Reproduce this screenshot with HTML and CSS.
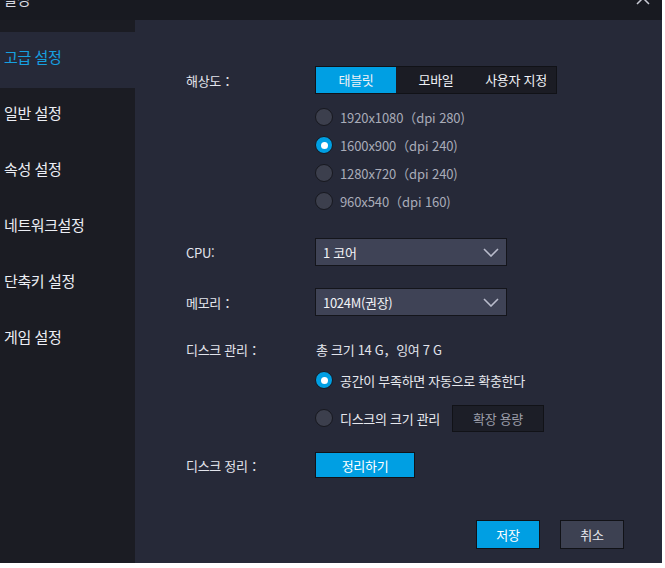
FILE: index.html
```html
<!DOCTYPE html>
<html lang="ko">
<head>
  <meta charset="UTF-8">
  <title>설정</title>
  <link rel="stylesheet" href="styles.css">
</head>
<body>
  <div class="dialog">
    <div class="titlebar">
      <span class="title">설정</span>
      <svg class="close" width="14" height="14" viewBox="0 0 14 14">
        <path d="M1 1 L13 13 M13 1 L1 13" stroke="#c8cad4" stroke-width="1.5" fill="none"/>
      </svg>
    </div>

    <div class="body">
      <ul class="sidebar">
        <li class="active">고급 설정</li>
        <li>일반 설정</li>
        <li>속성 설정</li>
        <li>네트워크설정</li>
        <li>단축키 설정</li>
        <li>게임 설정</li>
      </ul>

      <div class="main">
        <div class="row row-res">
          <span class="label">해상도：</span>
          <div class="tabs">
            <span class="tab active">태블릿</span>
            <span class="tab">모바일</span>
            <span class="tab">사용자 지정</span>
          </div>
        </div>

        <div class="radios">
          <div class="radio dim"><span class="dot"></span>1920x1080（dpi 280)</div>
          <div class="radio dim"><span class="dot on"></span>1600x900（dpi 240)</div>
          <div class="radio dim"><span class="dot"></span>1280x720（dpi 240)</div>
          <div class="radio dim"><span class="dot"></span>960x540（dpi 160)</div>
        </div>

        <div class="row row-cpu">
          <span class="label">CPU:</span>
          <div class="select">
            <span>1 코어</span>
            <svg width="16" height="9" viewBox="0 0 16 9"><path d="M1 1 L8 8 L15 1" stroke="#b9bccc" stroke-width="1.6" fill="none"/></svg>
          </div>
        </div>

        <div class="row row-mem">
          <span class="label">메모리：</span>
          <div class="select">
            <span>1024M(권장)</span>
            <svg width="16" height="9" viewBox="0 0 16 9"><path d="M1 1 L8 8 L15 1" stroke="#b9bccc" stroke-width="1.6" fill="none"/></svg>
          </div>
        </div>

        <div class="row row-disk">
          <span class="label">디스크 관리：</span>
          <span class="info">총 크기 14 G，잉여 7 G</span>
        </div>

        <div class="radio auto"><span class="dot on"></span>공간이 부족하면 자동으로 확충한다</div>
        <div class="radio manual">
          <span class="dot"></span>디스크의 크기 관리
          <button class="btn btn-dark">확장 용량</button>
        </div>

        <div class="row row-clean">
          <span class="label">디스크 정리：</span>
          <button class="btn btn-blue btn-clean">정리하기</button>
        </div>

        <div class="footer">
          <button class="btn btn-blue btn-foot">저장</button>
          <button class="btn btn-grey btn-foot">취소</button>
        </div>
      </div>
    </div>
  </div>
</body>
</html>
```

FILE: styles.css
```css
body {
  margin: 0;
  background: #fff;
  font-family: "Noto Sans CJK KR", sans-serif;
  font-size: 13px;
  color: #e2e4ec;
}
.dialog {
  width: 662px;
  height: 583px;
  margin-top: -20px;
  display: flex;
  flex-direction: column;
  background: #262938;
}
.titlebar {
  height: 40px;
  flex: none;
  display: flex;
  align-items: center;
  justify-content: space-between;
  padding: 0 12px 0 3px;
  background: #181a21;
  box-sizing: border-box;
}
.title {
  font-size: 15px;
  color: #d8dae2;
  margin-top: -4px;
}
.close {
  margin-top: -4px;
}
.body {
  flex: 1;
  display: flex;
}
.sidebar {
  list-style: none;
  margin: 0;
  padding: 12px 0 0;
  width: 135px;
  background: #1b1c23;
}
.sidebar li {
  height: 56px;
  line-height: 50px;
  padding-left: 4px;
  box-sizing: border-box;
  padding-bottom: 6px;
  font-size: 15px;
  letter-spacing: -0.4px;
  color: #eceef4;
}
.sidebar li.active {
  background: #262938;
  color: #17a0e0;
}
.main {
  flex: 1;
  padding: 46px 0 0 51px;
  letter-spacing: -0.3px;
}
.row {
  display: flex;
  align-items: center;
}
.label {
  width: 129px;
  flex: none;
}
.tabs {
  display: flex;
  border: 1px solid #111217;
  background: #1b1c24;
}
.tab {
  width: 80px;
  height: 26px;
  line-height: 26px;
  text-align: center;
  color: #f0f2f6;
}
.tab.active {
  background: #009fe3;
}
.radios {
  margin: 9px 0 0 129px;
}
.radio {
  height: 28px;
  display: flex;
  align-items: center;
  color: #e6e8ee;
}
.radio.dim {
  color: #a9acb8;
  letter-spacing: -0.1px;
}
.dot {
  width: 16px;
  height: 16px;
  border-radius: 50%;
  border: 1px solid #17181f;
  background: #3c3f4d;
  margin-right: 7px;
  position: relative;
  flex: none;
}
.dot.on {
  background: #009fe3;
}
.dot.on::after {
  content: "";
  position: absolute;
  left: 4.5px;
  top: 4.5px;
  width: 7px;
  height: 7px;
  border-radius: 50%;
  background: #fff;
}
.row-cpu {
  margin-top: 23px;
}
.row-mem {
  margin-top: 22px;
}
.select {
  width: 176px;
  height: 26px;
  padding: 0 7px;
  border: 1px solid #14151b;
  background: #3f4356;
  display: flex;
  align-items: center;
  justify-content: space-between;
}
.select span {
  color: #f2f3f7;
}
.row-disk {
  margin-top: 22px;
  height: 22px;
}
.info {
  margin-left: 1px;
}
.auto {
  margin: 6px 0 0 129px;
}
.manual {
  margin: 10px 0 0 129px;
}
.btn {
  font-family: inherit;
  font-size: 13px;
  letter-spacing: -0.3px;
  border: 1px solid #111217;
  padding: 0;
  cursor: pointer;
}
.btn-dark {
  width: 92px;
  height: 27px;
  margin-left: 12px;
  background: #1c1e27;
  color: #9c9eaa;
}
.btn-blue {
  background: #009fe3;
  color: #fff;
}
.btn-grey {
  background: #3d4152;
  color: #e6e8ee;
}
.row-clean {
  margin-top: 20px;
}
.btn-clean {
  width: 100px;
  height: 26px;
}
.footer {
  display: flex;
  justify-content: flex-end;
  gap: 20px;
  margin: 42px 38px 0 0;
}
.btn-foot {
  width: 64px;
  height: 29px;
}
```
